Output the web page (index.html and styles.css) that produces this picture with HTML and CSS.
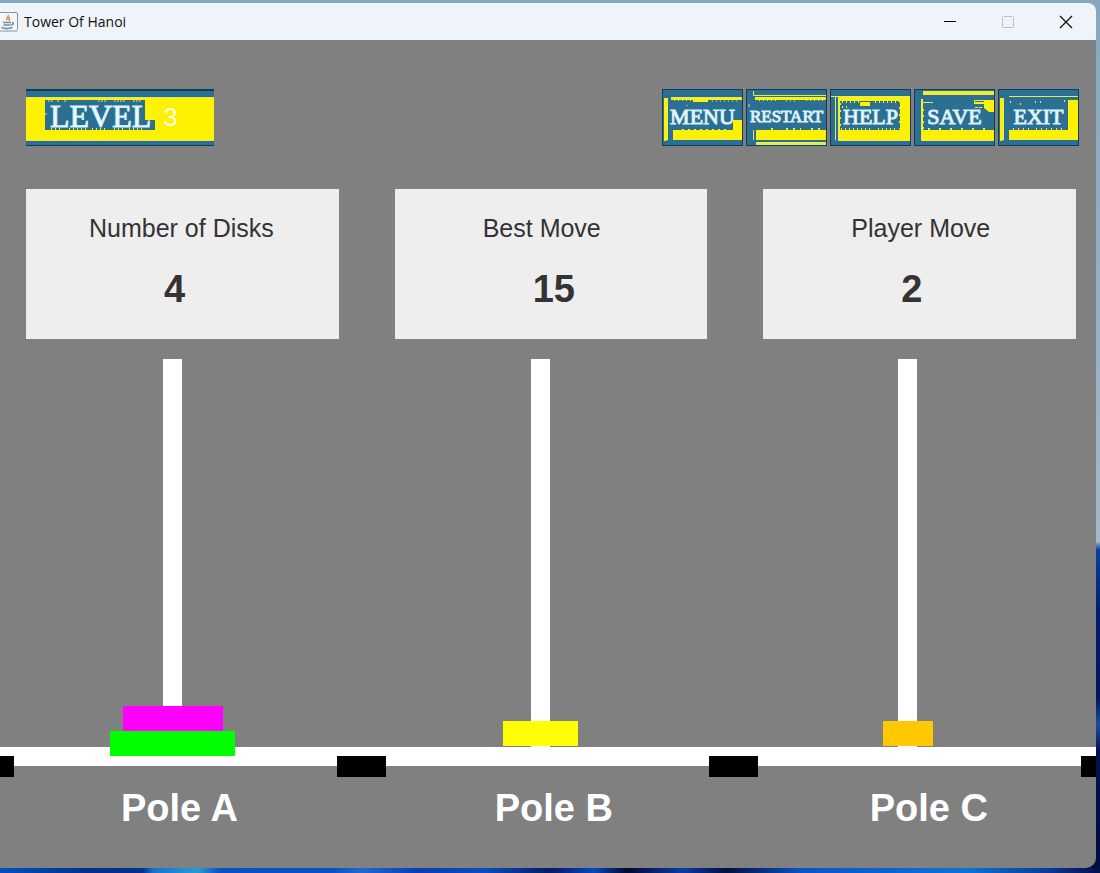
FILE: index.html
```html
<!DOCTYPE html>
<html lang="en">
<head>
<meta charset="utf-8">
<title>Tower Of Hanoi</title>
<link rel="stylesheet" href="styles.css">
</head>
<body>
<div class="window">
  <header class="titlebar">
    <svg class="app-icon" width="18" height="20" viewBox="0 0 18 20" aria-hidden="true">
      <rect x="-3" y=".5" width="20.5" height="18.5" rx="1.5" fill="#f4f6f7" stroke="#7e98ab"/>
      <path d="M8 3c2 2-3 3-1 5.500M10 5.500c-2 1.500-.5 2-1 3.500" fill="none" stroke="#e08a4c" stroke-width="1.600"/>
      <path d="M3 10.500h8M3.500 13h7M12 10.500c2.500.5 1 2.500-1 2.500M1.500 15.500c3 1.200 8 1.200 11 0" fill="none" stroke="#6d8fa8" stroke-width="1.600"/>
    </svg>
    <h1 class="title">Tower Of Hanoi</h1>
    <div class="controls">
      <button class="control" aria-label="Minimize"><svg width="14" height="14" viewBox="0 0 14 14"><path d="M1 6.500h12" stroke="#000"/></svg></button>
      <button class="control" aria-label="Maximize" disabled><svg width="14" height="14" viewBox="0 0 14 14"><rect x="1.500" y="1.500" width="11" height="11" rx="1" fill="none" stroke="#bcc3c9"/></svg></button>
      <button class="control" aria-label="Close"><svg width="14" height="14" viewBox="0 0 14 14"><path d="M1 1l12 12M13 1L1 13" stroke="#111" stroke-width="1.300"/></svg></button>
    </div>
  </header>

  <main class="game">
    <div class="toolbar">
      <div class="level">
        <svg class="plate" viewBox="0 0 188 57" preserveAspectRatio="none" aria-hidden="true">
          <rect width="188" height="57" fill="#0d3c5c"/>
          <rect y="2" width="188" height="54" fill="#2b6f93"/>
          <rect y="8" width="188" height="44" fill="#fff200"/>
          <path d="M0 8.500h188M0 51.500h188" stroke="#e3e65a"/>
          <path d="M19 11h100v20h10v10H19z" fill="#2b6f93"/>
          <path d="M22 12h5M31 12h2M38 12h3M72 12h9M88 12h12M107 12h8M20 24v2" stroke="#e9ee50" stroke-dasharray="2 1"/>
          <path d="M25 40h12M43 40h17M66 40h15M88 40h10M103 40h15" stroke="#e9ee50" stroke-width="2" stroke-dasharray="1 3"/>
        </svg>
        <span class="level-name">LEVEL</span>
        <span class="level-number">3</span>
      </div>
      <nav class="actions" aria-label="Game">
        <button class="action">
          <svg class="plate" viewBox="0 0 81 57" preserveAspectRatio="none" aria-hidden="true">
            <rect x=".5" y=".5" width="80" height="56" fill="#2b6f93" stroke="#0d3c5c"/>
            <path d="M2 9h4v42l-3 1H2zM9 8h71v3H46v2H31v-2H9zM11 41h60V31h9v20H11z" fill="#fff200"/>
            <path d="M9 8.500h71M5.500 9v42M11 50.500h69" stroke="#e3ec5c" fill="none"/>
            <path d="M12 11.500h19M50 12h26M25 16v2" stroke="#e9ee50" stroke-dasharray="1 3"/>
            <path d="M20 40.500h45" stroke="#e9ee50" stroke-dasharray="2 4"/>
          </svg>
          <span>MENU</span>
        </button>
        <button class="action action-long">
          <svg class="plate" viewBox="0 0 81 57" preserveAspectRatio="none" aria-hidden="true">
            <rect x=".5" y=".5" width="80" height="56" fill="#2b6f93" stroke="#0d3c5c"/>
            <path d="M9 8h71v3H9zM10 41h70v10H10z" fill="#fff200"/>
            <path d="M7.500 2v4.500H80M7.500 41v10M3 15v3" stroke="#e3ec5c" fill="none"/>
            <path d="M10 54.500h70" stroke="#e3ec5c" stroke-width="3"/>
            <path d="M13 11.500h20M40 12h10M60 11.500h18" stroke="#e9ee50" stroke-dasharray="1 3"/>
            <path d="M25 40h4M40 40h15M65 40h10" stroke="#e9ee50" stroke-width="2" stroke-dasharray="2 5"/>
          </svg>
          <span>RESTART</span>
        </button>
        <button class="action">
          <svg class="plate" viewBox="0 0 81 57" preserveAspectRatio="none" aria-hidden="true">
            <rect x=".5" y=".5" width="80" height="56" fill="#2b6f93" stroke="#0d3c5c"/>
            <path d="M8 8h72v43H8z" fill="#fff200"/>
            <path d="M10 12h58l2 2v27H10z" fill="#2b6f93"/>
            <path d="M30 13h10v4H30z" fill="#fff200"/>
            <path d="M1 7.500h79M5.500 8v43M8.500 9v43M9 51.500h71" stroke="#e3ec5c" fill="none"/>
            <path d="M12 13h18M45 13h23M12 18h6M11 40h30M48 40h18" stroke="#e9ee50" stroke-width="2" stroke-dasharray="1 3"/>
            <path d="M10.500 14v26M69.500 18v22" stroke="#e9ee50" stroke-dasharray="2 5"/>
          </svg>
          <span>HELP</span>
        </button>
        <button class="action">
          <svg class="plate" viewBox="0 0 81 57" preserveAspectRatio="none" aria-hidden="true">
            <rect x=".5" y=".5" width="80" height="56" fill="#2b6f93" stroke="#0d3c5c"/>
            <path d="M9 2h71v4H9z" fill="#f0ed35"/>
            <path d="M7 10h2v31h71v10H7zM60 11h20v12h-5l-5-4v-4H60z" fill="#fff200"/>
            <path d="M61 13.500h9M61 18.500h8" stroke="#e9ee50" stroke-dasharray="3 1"/>
            <path d="M61 12.500h9" stroke="#2b6f93"/>
            <path d="M9 13.500h10M7.500 10v41.500H80" stroke="#e3ec5c" fill="none"/>
            <path d="M14 40h60" stroke="#e9ee50" stroke-width="2" stroke-dasharray="2 9"/>
            <path d="M9.500 20v20" stroke="#e9ee50" stroke-dasharray="2 4"/>
          </svg>
          <span>SAVE</span>
        </button>
        <button class="action">
          <svg class="plate" viewBox="0 0 81 57" preserveAspectRatio="none" aria-hidden="true">
            <rect x=".5" y=".5" width="80" height="56" fill="#2b6f93" stroke="#0d3c5c"/>
            <path d="M2 9h4v42l-3 1H2zM11 41h59V11h10v40H11z" fill="#fff200"/>
            <path d="M11 7.500h69M5.500 9v42M11 50.500h69" stroke="#e3ec5c" fill="none"/>
            <path d="M12 13h3M22 15h5M37 13h8M66 12h4M15 40h16M38 40h30" stroke="#e9ee50" stroke-width="2" stroke-dasharray="1 4"/>
          </svg>
          <span>EXIT</span>
        </button>
      </nav>
    </div>

    <section class="stats" aria-label="Statistics">
      <div class="stat stat-wide"><h2 class="stat-label">Number of Disks</h2><p class="stat-value">4</p></div>
      <div class="stat"><h2 class="stat-label">Best Move</h2><p class="stat-value">15</p></div>
      <div class="stat"><h2 class="stat-label">Player Move</h2><p class="stat-value">2</p></div>
    </section>

    <section class="board" aria-label="Board">
      <div class="peg"><div class="stack stack-low"><div class="disk disk-3"></div><div class="disk disk-4"></div></div></div>
      <div class="peg"><div class="stack"><div class="disk disk-2"></div></div></div>
      <div class="peg"><div class="stack"><div class="disk disk-1"></div></div></div>
    </section>
    <div class="base">
      <div class="feet"><i class="foot"></i><i class="foot"></i><i class="foot"></i><i class="foot"></i></div>
    </div>
    <div class="pole-names">
      <span>Pole A</span><span>Pole B</span><span>Pole C</span>
    </div>
  </main>
</div>
</body>
</html>
```
FILE: styles.css
```css
* {
  box-sizing: border-box;
}

body {
  margin: 0;
  padding: 3px 4px 5px 0;
  min-height: 100vh;
  display: flex;
  font-family: "Liberation Sans", Arial, sans-serif;
  background:
    linear-gradient(100deg, #0550bd 0, #032f8c 8%, #02308f 13%, #1a72d0 14%, #2a9bd0 18%, #0b51c4 20%, #0a4fc5 30%, #1e6bd0 33%, #0a3db0 38%, #0d4cc0 44%, #031c62 50%, #0a46bd 54%, #01092e 57%, #0a3caa 62%, #01113e 66%, #0b55c8 73%, #0e72d8 88%, #0a3c98 95%, #010f45 100%) bottom / 100% 5px no-repeat,
    linear-gradient(#85a8c1 0, #8fafc5 30%, #a3b8c8 62%, #0a3f9e 63%, #031d70 70%, #02175a 80%, #1c4f9c 83%, #02144d 86%, #010d3c 100%);
}

.window {
  flex: 1;
  display: flex;
  flex-direction: column;
  overflow: hidden;
  border-radius: 0 8px 10px 0;
  background: #808080;
}

.titlebar {
  display: flex;
  align-items: center;
  height: 37px;
  padding-right: 1px;
  background: #eff4fa;
}

.title {
  flex: 1;
  margin: 0 0 0 6px;
  font: 400 14px/20px "Open Sans", "Noto Sans", sans-serif;
  color: #111;
}

.controls {
  display: flex;
}

.control {
  display: grid;
  place-items: center;
  width: 58px;
  height: 37px;
  padding: 0;
  border: 0;
  background: none;
}

.game {
  flex: 1;
  display: flex;
  flex-direction: column;
  padding-top: 49px;
}

.toolbar {
  display: flex;
  justify-content: space-between;
  padding: 0 17px 0 26px;
}

.level,
.action {
  position: relative;
  isolation: isolate;
  display: flex;
  align-items: center;
  height: 57px;
  color: #f2fdff;
}

.plate {
  position: absolute;
  z-index: -1;
  inset: 0;
  width: 100%;
  height: 100%;
}

.level {
  width: 188px;
  padding-left: 24px;
  gap: 12px;
}

.level-name {
  padding-bottom: 4px;
  font: 400 32px/40px "Liberation Serif", serif;
  -webkit-text-stroke: 1px #d4eff7;
}

.level-number {
  font-size: 26px;
  color: #fffde0;
}

.actions {
  display: flex;
  gap: 3px;
}

.action {
  justify-content: center;
  width: 81px;
  padding: 0 0 2px;
  border: 0;
  background: none;
  font: 400 22px/30px "Liberation Serif", serif;
  -webkit-text-stroke: 1px #d4eff7;
}

.action-long {
  font-size: 17px;
}

.stats {
  display: grid;
  grid-template-columns: repeat(3, 1fr);
  gap: 56px;
  margin-top: 43px;
  padding: 0 20px 0 26px;
}

.stat {
  height: 150px;
  padding-top: 24px;
  background: #eee;
  color: #333;
}

.stat-label {
  margin: 0;
  padding-left: 88px;
  font-size: 25px;
  font-weight: 400;
  line-height: 30px;
}

.stat-wide .stat-label {
  padding-left: 63px;
}

.stat-value {
  margin: 25px 0 0;
  padding-left: 138px;
  font-size: 38px;
  font-weight: 700;
  line-height: 42px;
}

.board {
  flex: 1;
  display: flex;
  justify-content: space-between;
  min-height: 200px;
  margin-top: 20px;
  padding: 0 179px 0 163px;
}

.peg {
  position: relative;
  z-index: 1;
  width: 19px;
  background: #fff;
}

.stack {
  position: absolute;
  right: -53px;
  bottom: 1px;
  left: -53px;
  display: flex;
  flex-direction: column;
  align-items: center;
}

.stack-low {
  bottom: -9px;
}

.disk {
  height: 25px;
}

.disk-1 {
  width: 50px;
  background: #ffc800;
}

.disk-2 {
  width: 75px;
  background: #ff0;
}

.disk-3 {
  width: 100px;
  background: #f0f;
}

.disk-4 {
  width: 125px;
  background: #0f0;
}

.base {
  position: relative;
  height: 19px;
  background: #fff;
}

.feet {
  position: absolute;
  top: 9px;
  right: -34px;
  left: -35px;
  display: flex;
  justify-content: space-between;
}

.foot {
  width: 49px;
  height: 21px;
  background: #000;
}

.pole-names {
  display: flex;
  justify-content: space-between;
  height: 102px;
  padding: 20px 108px 0 121px;
  font-size: 38px;
  font-weight: 700;
  line-height: 44px;
  color: #fff;
}
```
